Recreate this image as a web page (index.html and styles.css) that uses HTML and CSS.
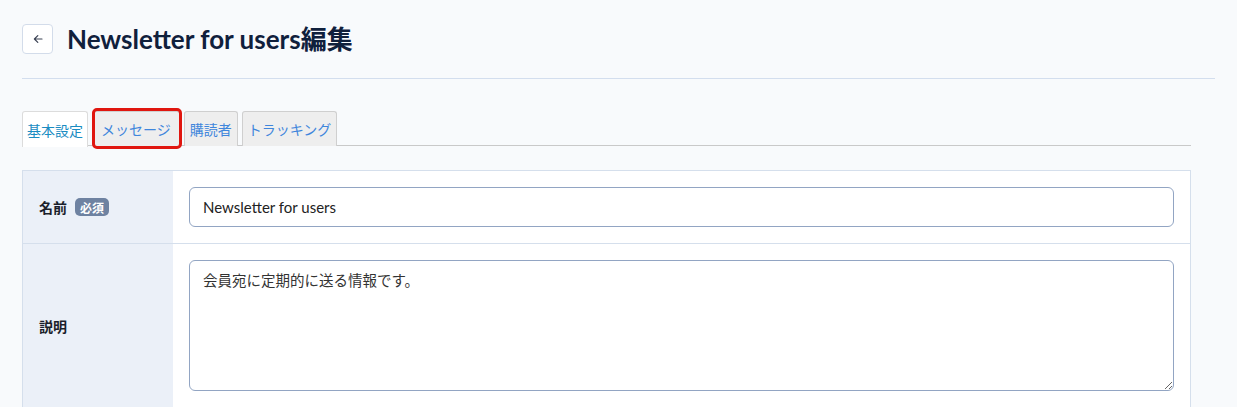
FILE: index.html
```html
<!DOCTYPE html>
<html lang="ja">
<head>
<meta charset="utf-8">
<title>Newsletter for users編集</title>
<link rel="stylesheet" href="styles.css">
</head>
<body>
<div class="page">
  <header class="page-header">
    <button class="back-btn" type="button" aria-label="戻る">
      <svg width="10" height="10" viewBox="0 0 10 10" fill="none" stroke="#3b4254" stroke-width="1.2" stroke-linecap="round" stroke-linejoin="round"><path d="M9 5H1.5M4.8 1.6 1.4 5l3.4 3.4"/></svg>
    </button>
    <h1 class="title">Newsletter for users編集</h1>
  </header>
  <div class="content">
    <nav class="tabs">
      <a class="tab active">基本設定</a>
      <a class="tab highlighted">メッセージ</a>
      <a class="tab">購読者</a>
      <a class="tab">トラッキング</a>
    </nav>
    <div class="form-table">
      <div class="row row-name">
        <div class="label">名前 <span class="badge">必須</span></div>
        <div class="field"><input class="input" type="text" value="Newsletter for users"></div>
      </div>
      <div class="row row-desc">
        <div class="label">説明</div>
        <div class="field"><textarea class="textarea">会員宛に定期的に送る情報です。</textarea></div>
      </div>
    </div>
  </div>
</div>
</body>
</html>
```
FILE: styles.css
```css
* { box-sizing: border-box; }
html, body { margin: 0; padding: 0; }
body {
  background: #f8fafc;
  font-family: "Noto Sans CJK JP", "Noto Sans", sans-serif;
  color: #222;
  overflow: hidden;
}
.page {
  padding: 24px 22px 0 22px;
}
.page-header {
  display: flex;
  align-items: center;
  gap: 14px;
  padding-bottom: 24px;
  border-bottom: 1px solid #d3deee;
}
.back-btn {
  width: 31px;
  height: 30px;
  display: flex;
  align-items: center;
  justify-content: center;
  background: #fff;
  border: 1px solid #d3dcea;
  border-radius: 4px;
  padding: 0;
}
.title {
  margin: 0;
  font-family: "Lato", "Noto Sans CJK JP", sans-serif;
  font-weight: 700;
  font-size: 26px;
  line-height: 30px;
  color: #10203c;
}
.content {
  margin-right: 24px;
  padding-top: 32px;
}
.tabs {
  display: flex;
  gap: 4px;
  border-bottom: 1px solid #c9c9c9;
  height: 35px;
}
.tab {
  position: relative;
  display: flex;
  align-items: center;
  height: 35px;
  padding: 0 5px;
  font-size: 14px;
  color: #3f86dc;
  background: #eeeeee;
  border: 1px solid #cfcfcf;
  border-bottom: none;
  border-radius: 3px 3px 0 0;
}
.tab.active {
  background: #fff;
  color: #1a8cc2;
  height: 36px;
  padding: 0 4px;
  border-color: #dcdcdc;
}
.tab.highlighted {
  padding: 0 8px;
}
.tab.highlighted::after {
  content: "";
  position: absolute;
  top: -4px;
  left: -1px;
  right: -3px;
  bottom: -3px;
  border: 3px solid #e0160f;
  border-radius: 5px;
}
.form-table {
  margin-top: 24px;
  border: 1px solid #d5dfec;
  background: #fff;
}
.row {
  display: flex;
}
.row + .row { border-top: 1px solid #d5dfec; }
.label {
  width: 150px;
  flex: none;
  background: #ebf0f8;
  display: flex;
  align-items: center;
  gap: 8px;
  padding-left: 16px;
  font-size: 14px;
  font-weight: 700;
  color: #1b1f2b;
}
.badge {
  display: inline-flex;
  align-items: center;
  height: 18px;
  padding: 0 5px;
  background: #6e82a1;
  color: #fff;
  font-size: 12px;
  font-weight: 700;
  border-radius: 5px;
}
.field {
  flex: 1;
  padding: 16px;
}
.input, .textarea {
  width: 100%;
  display: block;
  border: 1px solid #92a5c3;
  border-radius: 6px;
  background: #fff;
  color: #222;
  outline: none;
}
.input {
  height: 40px;
  padding: 0 13px;
  font-size: 15px;
  font-family: "Lato", "Noto Sans CJK JP", sans-serif;
}
.textarea {
  height: 131px;
  padding: 8px 13px;
  font-size: 14.5px;
  line-height: 21px;
  font-family: "Noto Sans CJK JP", sans-serif;
  resize: vertical;
  color: #333;
}
```
